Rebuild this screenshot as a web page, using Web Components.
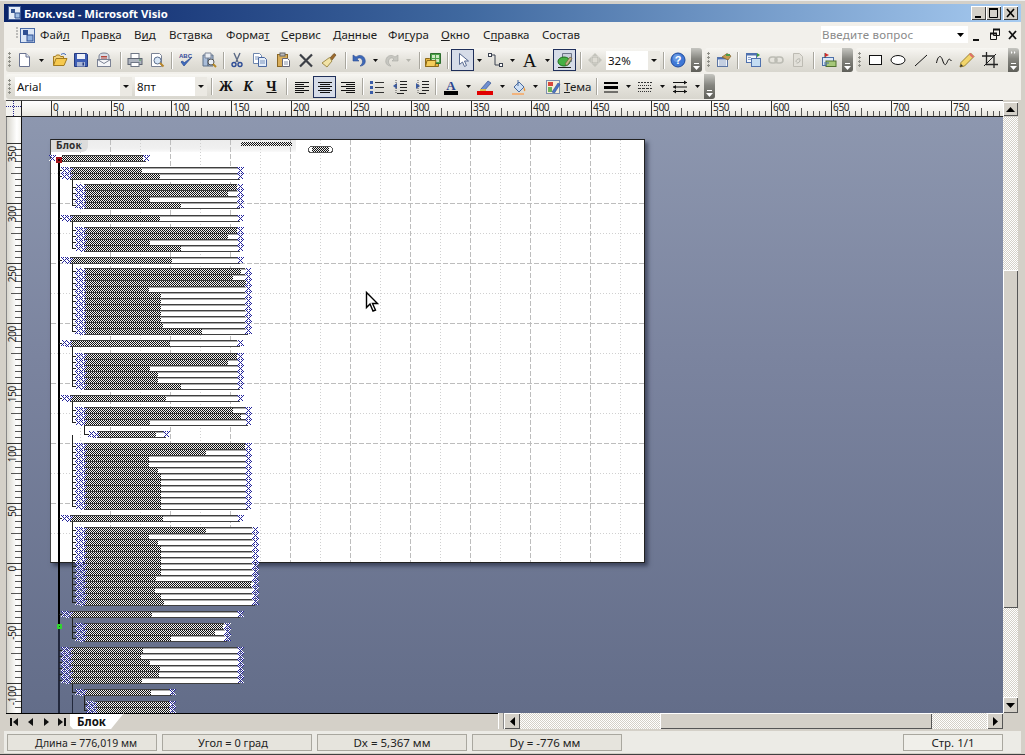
<!DOCTYPE html>
<html lang="ru">
<head>
<meta charset="utf-8">
<title>Блок.vsd - Microsoft Visio</title>
<style>
html, body { margin: 0; padding: 0; background: #d4d0c8; overflow: hidden; }
</style>
</head>
<body>
<vs-window>
    <vs-titlebar></vs-titlebar>
    <vs-menubar></vs-menubar>
    <vs-dock h="26">
        <vs-toolbar w="696">
            <vs-btn icon="new" w="17"></vs-btn><vs-dd w="18"></vs-dd>
            <vs-btn icon="open" w="20"></vs-btn><vs-btn icon="save" w="22"></vs-btn><vs-btn icon="mail" w="24"></vs-btn>
            <vs-sep w="8"></vs-sep>
            <vs-btn icon="print" w="21"></vs-btn><vs-btn icon="preview" w="23"></vs-btn>
            <vs-sep w="6"></vs-sep>
            <vs-btn icon="spell" w="24"></vs-btn><vs-btn icon="research" w="22"></vs-btn>
            <vs-sep w="6"></vs-sep>
            <vs-btn icon="cut" w="22"></vs-btn><vs-btn icon="copy" w="24"></vs-btn><vs-btn icon="paste" w="22"></vs-btn><vs-btn icon="del" w="24"></vs-btn><vs-btn icon="brush" w="22"></vs-btn>
            <vs-sep w="10"></vs-sep>
            <vs-btn icon="undo" w="17"></vs-btn><vs-dd w="16"></vs-dd><vs-btn icon="redo" w="18"></vs-btn><vs-dd w="14" dim></vs-dd>
            <vs-sep w="8"></vs-sep>
            <vs-btn icon="shapes" w="20"></vs-btn>
            <vs-sep w="8"></vs-sep>
            <vs-btn icon="pointer" w="23" selected></vs-btn><vs-dd w="10"></vs-dd>
            <vs-btn icon="connector" w="22"></vs-btn><vs-dd w="12"></vs-dd>
            <vs-btn glyph="A" w="23"></vs-btn><vs-dd w="12"></vs-dd>
            <vs-btn icon="tool" w="23" selected></vs-btn>
            <vs-sep w="9"></vs-sep>
            <vs-btn icon="pan" w="19"></vs-btn>
            <vs-combo w="56" inset="2" text="32%"></vs-combo>
            <vs-sep w="6"></vs-sep>
            <vs-btn icon="help" w="24"></vs-btn>
        </vs-toolbar>
        <vs-toolbar w="148">
            <vs-btn icon="layer" w="19"></vs-btn>
            <vs-sep w="8"></vs-sep>
            <vs-btn icon="windows" w="24"></vs-btn><vs-btn icon="link" w="22"></vs-btn><vs-btn icon="refresh" w="22"></vs-btn>
            <vs-sep w="8"></vs-sep>
            <vs-btn icon="flag" w="24"></vs-btn>
        </vs-toolbar>
        <vs-toolbar w="163" more>
            <vs-btn icon="rect" w="21"></vs-btn><vs-btn icon="ellipse" w="23"></vs-btn><vs-btn icon="line" w="23"></vs-btn><vs-btn icon="free" w="23"></vs-btn><vs-btn icon="pencil" w="23"></vs-btn><vs-btn icon="crop" w="24"></vs-btn>
        </vs-toolbar>
    </vs-dock>
    <vs-dock h="27">
        <vs-toolbar w="709">
            <vs-combo w="120" pad="3" text="Arial"></vs-combo>
            <vs-combo w="72" text="8пт"></vs-combo>
            <vs-sep w="9"></vs-sep>
            <vs-btn glyph="Ж" w="20" weight="700"></vs-btn><vs-btn glyph="К" w="24" weight="700" italic></vs-btn><vs-btn glyph="Ч" w="23" weight="700" under></vs-btn>
            <vs-sep w="7"></vs-sep>
            <vs-btn icon="left" w="23"></vs-btn><vs-btn icon="center" w="23" selected></vs-btn><vs-btn icon="right" w="23"></vs-btn>
            <vs-sep w="6"></vs-sep>
            <vs-btn icon="list" w="23"></vs-btn><vs-btn icon="outdent" w="23"></vs-btn><vs-btn icon="indent" w="21"></vs-btn>
            <vs-sep w="7"></vs-sep>
            <vs-btn icon="fontcolor" w="23"></vs-btn><vs-dd w="12"></vs-dd>
            <vs-btn icon="linecolor" w="22"></vs-btn><vs-dd w="12"></vs-dd>
            <vs-btn icon="fillcolor" w="22"></vs-btn><vs-dd w="11"></vs-dd>
            <vs-btn icon="theme" w="23"></vs-btn><vs-label w="28"><u>Т</u>ема</vs-label>
            <vs-sep w="8"></vs-sep>
            <vs-btn icon="weight" w="22"></vs-btn><vs-dd w="13"></vs-dd>
            <vs-btn icon="pattern" w="20"></vs-btn><vs-dd w="14"></vs-dd>
            <vs-btn icon="ends" w="22"></vs-btn><vs-dd w="12"></vs-dd>
        </vs-toolbar>
    </vs-dock>
    <vs-workspace></vs-workspace>
    <vs-tabrow></vs-tabrow>
    <vs-statusbar>
        <vs-cell w="150" nudge="8" size="10.5">Длина = 776,019 мм</vs-cell>
        <vs-cell w="150" nudge="-8" size="11">Угол = 0 град</vs-cell>
        <vs-cell w="150">Dx = 5,367 мм</vs-cell>
        <vs-cell w="150" nudge="-4">Dy = -776 мм</vs-cell>
        <vs-cell w="100" push>Стр. 1/1</vs-cell>
    </vs-statusbar>
</vs-window>

<script>
const UI_FONT = `"Noto Sans", "Open Sans", sans-serif`;

const ICONS = {
    new: `<path d="M3.5 1.5h6.5l3.5 3.5v9.5h-10z" fill="#fff" stroke="#6a7390"/><path d="M10 1.5v3.5h3.5" fill="#dfe6f2" stroke="#6a7390"/>`,
    open: `<path d="M1.5 13.5v-9h2l1-1.5h3l1 1.5h3v2" fill="#f3d27a" stroke="#a37b1f"/><path d="M1.5 13.5l2.5-7h11l-3 7z" fill="#f6c94f" stroke="#a37b1f"/><path d="M9 2.5c2-1.5 4-1 5 .5" fill="none" stroke="#3a66b8"/>`,
    save: `<path d="M1.5 1.5h12l1 1v12h-13z" fill="#3f5fb5" stroke="#243a80"/><rect x="4" y="2" width="8" height="5" fill="#eef1f8"/><rect x="4" y="10" width="8" height="4.5" fill="#aab6d5"/><rect x="9.5" y="10.5" width="1.5" height="3" fill="#243a80"/>`,
    mail: `<path d="M3 8V4c0-2 2-3 5-3s5 1 5 3v4" fill="#d8dce4" stroke="#7b8294"/><rect x="1.5" y="7.5" width="13" height="7" fill="#f4f5f8" stroke="#7b8294"/><path d="M1.5 7.5l6.5 4 6.5-4" fill="none" stroke="#7b8294"/><path d="M5 4.5h6M5 6h6" stroke="#b5473c"/>`,
    print: `<rect x="4" y="1.5" width="8" height="5" fill="#fff" stroke="#6f7785"/><rect x="1" y="6.5" width="14" height="6" fill="#aeb4bf" stroke="#5e6572"/><rect x="4" y="10.5" width="8" height="4" fill="#fff" stroke="#6f7785"/><path d="M12 8h2" stroke="#46a046"/>`,
    preview: `<path d="M2.5 1.5h8l2 2v11h-10z" fill="#fff" stroke="#7a8294"/><circle cx="8.5" cy="8.5" r="3.5" fill="#d7e6f6" stroke="#5d6f8e"/><path d="M11 11l3.5 3.5" stroke="#b8862b" stroke-width="2"/>`,
    spell: `<text x="1" y="6" font-size="6" font-weight="700" font-family="Liberation Sans" fill="#33499a">ABC</text><path d="M3 10l3 4 8-9-7.5 5.5L4 9z" fill="#3f6cc0" stroke="#2b4a8f" stroke-width=".7"/>`,
    research: `<path d="M2 3h5v11H2zM7 3h5v11H7z" fill="#a9bdd9" stroke="#5f7088"/><path d="M4 1h6v5H4z" fill="#e9edf3" stroke="#7c8698"/><circle cx="10" cy="10" r="3" fill="#e8eef6" stroke="#555"/><path d="M12 12l3 3" stroke="#b68928" stroke-width="2"/>`,
    cut: `<path d="M5 1l4 9M11 1L7 10" stroke="#5b6a85" stroke-width="1.4" fill="none"/><circle cx="5" cy="12.5" r="2" fill="none" stroke="#2f4d96" stroke-width="1.4"/><circle cx="11" cy="12.5" r="2" fill="none" stroke="#2f4d96" stroke-width="1.4"/>`,
    copy: `<path d="M1.5 1.5h6l2 2v8h-8z" fill="#fff" stroke="#6e86ad"/><path d="M6.5 5.5h6l2 2v7h-8z" fill="#e4edf8" stroke="#4a67a0"/><path d="M8 9h5M8 11h5M3 5h4M3 7h3" stroke="#7a93bd"/>`,
    paste: `<rect x="2.5" y="2.5" width="10" height="12" fill="#d9ae5b" stroke="#8a6726"/><rect x="5" y="1" width="5" height="3" fill="#bbb" stroke="#666"/><path d="M7.5 6.5h5l2 2v6h-7z" fill="#fff" stroke="#667"/><path d="M9 10h4M9 12h4" stroke="#8892a8"/>`,
    del: `<path d="M2 2.5l12 12M14 2.5l-12 12" stroke="#3c3f46" stroke-width="2.2" fill="none"/>`,
    brush: `<path d="M9 6l4-4.5 2 1.5-4 5z" fill="#9c6a2d" stroke="#6d4a1e" stroke-width=".7"/><path d="M8.5 5.5L11 9 6 15 1 11z" fill="#f2e3a6" stroke="#a08c4c"/>`,
    undo: `<path d="M2 3v6h6L6 7c2-2 5-1 5.5 2 .3 2-1 4-2.5 5 4 0 6-3 5-6.5C13 3.5 8.5 2 5 5z" fill="#3d68b8" stroke="#2b4c90" stroke-width=".6"/>`,
    redo: `<path d="M14 3v6H8l2-2c-2-2-5-1-5.5 2C4.2 11 5.5 13 7 14c-4 0-6-3-5-6.5C3 3.5 7.5 2 11 5z" fill="#c6c6c0" stroke="#a8a8a2" stroke-width=".6"/>`,
    shapes: `<path d="M.5 14.5v-8h4l1-1h8v9z" fill="#e8b53c" stroke="#8d6a1a"/><path d="M5.5 1.5h10v10h-10z" fill="#4ca24a" stroke="#2d6d2c"/><path d="M7 3h3v3H7zM11 3h3v3h-3zM7 7h3v3H7zM11 7h3v3h-3z" fill="#cfe9c3"/><path d="M.5 14.5l1.5-6h9l-1 6z" fill="#f4cc5a" stroke="#8d6a1a"/>`,
    pointer: `<path d="M4.5 1.5v11l3-2.5 2 4.5 2-1-2-4.5h4z" fill="#fff" stroke="#55678f"/>`,
    connector: `<rect x="1.5" y="1.5" width="3" height="3" fill="#fff" stroke="#3b4250"/><rect x="12.5" y="11.5" width="3" height="3" fill="#fff" stroke="#3b4250"/><path d="M4.5 3h3.5v10h4.5" fill="none" stroke="#3b4250"/>`,
    tool: `<path d="M5.5 1.5h9v8h-9z" fill="#c9cfdb" stroke="#6c7488"/><ellipse cx="7" cy="9.5" rx="6" ry="4.5" fill="#45b044" stroke="#1f6e1f"/><path d="M8 12l5-7 2 1.5-5 7z" fill="#c7b68b" stroke="#6b5f3a" stroke-width=".7"/><path d="M1 15.5h13" stroke="#222"/>`,
    pan: `<path d="M8 1l3 3H5zM8 15l3-3H5zM1 8l3-3v6zM15 8l-3-3v6z" fill="#c4c4bc"/><rect x="5" y="5" width="6" height="6" fill="#dedcd4" stroke="#b5b5ad"/>`,
    help: `<circle cx="8" cy="8" r="7" fill="#3f78d6" stroke="#1f4a9c"/><circle cx="7" cy="6" r="4" fill="#7faaea" opacity=".6"/><text x="8" y="12" font-size="11" font-weight="700" text-anchor="middle" font-family="Liberation Sans" fill="#fff">?</text>`,
    layer: `<rect x="1.5" y="5.5" width="10" height="9" fill="#eef2f8" stroke="#5c75a3"/><path d="M1.5 5.5h10v2h-10z" fill="#4c70b5"/><path d="M3 9h7M3 11h7M3 13h7" stroke="#9bacc9"/><path d="M6 5l5-3.5 4 2.5-3 4z" fill="#c79a4d" stroke="#7d5d25" stroke-width=".7"/><path d="M10 3h4" stroke="#4a9a4a" stroke-width="2"/>`,
    windows: `<rect x="1.5" y="1.5" width="10" height="9" fill="#f3f6fb" stroke="#4f71ae"/><path d="M1.5 1.5h10v2h-10z" fill="#4f71ae"/><path d="M3 5.5h3M3 7.5h3" stroke="#8ba3cc"/><rect x="6.5" y="6.5" width="9" height="8" fill="#c3dcf2" stroke="#4f71ae"/><path d="M12 1l3 2-3 2z" fill="#3d9a3d"/>`,
    link: `<rect x="1" y="5" width="8" height="6" rx="3" fill="none" stroke="#bcbcb4" stroke-width="1.6"/><rect x="7" y="5" width="8" height="6" rx="3" fill="none" stroke="#bcbcb4" stroke-width="1.6"/>`,
    refresh: `<path d="M3.5 1.5h6l3 3v10h-9z" fill="#e2e0d9" stroke="#bdbbb3"/><path d="M6 10a3 3 0 0 1 4-3M10 7.5a3 3 0 0 1-3.5 3.5" fill="none" stroke="#b5b5ad"/>`,
    flag: `<rect x="1.5" y="5.5" width="11" height="8" fill="#dce8f6" stroke="#4c6fa8"/><rect x="5" y="9" width="10" height="5.5" fill="#a6c879" stroke="#50712f"/><path d="M4 1v5" stroke="#444"/><path d="M4 1l4 2-4 2z" fill="#d02a2a"/><path d="M3 11h5M3 13h3" stroke="#4c6fa8"/>`,
    rect: `<rect x="1.5" y="3.5" width="12" height="9" fill="#fff" stroke="#111"/>`,
    ellipse: `<ellipse cx="8" cy="8" rx="7" ry="4.5" fill="#fff" stroke="#111"/>`,
    line: `<path d="M2 14L14 3" stroke="#111" fill="none"/>`,
    free: `<path d="M.5 11C2 3 5 3 6.5 8s3 6 4.5 2.5S13 6 15.5 9" stroke="#111" fill="none"/>`,
    pencil: `<path d="M1 15l1-4.5L11.5 1l3.5 3.5L5.5 14z" fill="#f2d56b" stroke="#9c8431"/><path d="M1 15l1-3 2 2z" fill="#333"/><path d="M11.5 1l3.5 3.5-1.5 1.5-3.5-3.5z" fill="#e0706a"/>`,
    crop: `<path d="M4.5 0v12.5H16M0 4h12v12" fill="none" stroke="#222" stroke-width="1.3"/><path d="M2 14L14 2" stroke="#222"/>`,
    left: `<path d="M1 3.5h14M1 5.5h9M1 7.5h14M1 9.5h9M1 11.5h14M1 13.5h9" stroke="#111"/>`,
    center: `<path d="M1 3.5h14M3 5.5h10M1 7.5h14M3 9.5h10M1 11.5h14M3 13.5h10" stroke="#111"/>`,
    right: `<path d="M1 3.5h14M6 5.5h9M1 7.5h14M6 9.5h9M1 11.5h14M6 13.5h9" stroke="#111"/>`,
    list: `<path d="M6 3.5h9M6 8.5h9M6 13.5h9" stroke="#333"/><path d="M1 2h3v3H1zM1 7h3v3H1zM1 12h3v3H1z" fill="#3a5ca8"/>`,
    outdent: `<path d="M8 2.5h7M8 5.5h7M8 8.5h7M8 11.5h7M5 14.5h7" stroke="#222"/><path d="M1 7l4-3v6z" fill="#3a5ca8"/><path d="M4 1v13" stroke="#555" stroke-dasharray="1 1"/>`,
    indent: `<path d="M8 2.5h7M8 5.5h7M8 8.5h7M8 11.5h7M5 14.5h7" stroke="#222"/><path d="M6 7L2 4v6z" fill="#3a5ca8"/><path d="M4 1v13" stroke="#555" stroke-dasharray="1 1"/>`,
    fontcolor: `<text x="8" y="11" font-size="13" font-weight="700" text-anchor="middle" font-family="Liberation Serif" fill="#2b4490">A</text><rect x="1" y="12" width="14" height="4" fill="#000"/>`,
    linecolor: `<path d="M4 10l7-8 3 2-7 8z" fill="#6f8fd0" stroke="#33528f" stroke-width=".7"/><path d="M3 11h6" stroke="#d9c04a" stroke-width="2"/><rect x="0" y="12" width="16" height="4" fill="#e00000"/>`,
    fillcolor: `<path d="M3 8l5-5 5 5-5 5z" fill="#cfe0f4" stroke="#486a9f"/><path d="M7 1v6" stroke="#486a9f"/><path d="M13 8c1 2 2 3 1 4s-2-2-1-4z" fill="#e8963a"/><rect x="1" y="14" width="12" height="2" fill="#f1b37d"/>`,
    theme: `<rect x="1.5" y="1.5" width="13" height="13" fill="#f5efd8" stroke="#7c8fb0"/><path d="M3 3h5v4H3z" fill="#d8483c"/><path d="M3 8h4v5H3z" fill="#6fb25a"/><path d="M7 13L13 4l2 1.5-5.5 8.5z" fill="#4a73c4" stroke="#2e4f92" stroke-width=".6"/>`,
    weight: `<path d="M1 4h14" stroke="#000" stroke-width="2"/><path d="M1 8.5h14" stroke="#000" stroke-width="3"/><path d="M1 13h14" stroke="#000" stroke-width="1"/>`,
    pattern: `<path d="M1 3.5h14" stroke="#333" stroke-dasharray="2 1"/><path d="M1 6.5h14" stroke="#333" stroke-dasharray="1 1"/><path d="M1 9.5h14" stroke="#333" stroke-dasharray="3 1"/><path d="M1 12.5h14" stroke="#333" stroke-dasharray="1 1"/>`,
    ends: `<path d="M1 3.5h14M1 8h14M1 12.5h14" stroke="#111"/><path d="M15 3.5l-3-2v4zM1 8l3-2v4zM15 12.5l-3-2v4zM1 12.5l3-2v4z" fill="#111"/>`
};

class VsWindow extends HTMLElement {
    constructor() {
        super();
        this.attachShadow({ mode: 'open' });
    }

    connectedCallback() {
        this.shadowRoot.innerHTML = `
            <style>
                :host {
                    display: flex;
                    flex-direction: column;
                    width: 1025px;
                    height: 755px;
                    box-sizing: border-box;
                    padding: 4px 4px 2px 4px;
                    background: #d4d0c8;
                    border-top: 1px solid #eee;
                    border-bottom: 1px solid #404040;
                    font-family: ${UI_FONT};
                    overflow: hidden;
                }
            </style>
            <slot></slot>
        `;
    }
}

class VsTitlebar extends HTMLElement {
    constructor() {
        super();
        this.attachShadow({ mode: 'open' });
    }

    connectedCallback() {
        this.shadowRoot.innerHTML = `
            <style>
                :host {
                    display: flex;
                    align-items: center;
                    height: 18px;
                    margin-top: -1px;
                    flex: none;
                    background: linear-gradient(90deg, #0a246a, #3f689f 45%, #a6caf0);
                    color: #fff;
                    font: 700 11.3px "Noto Sans", sans-serif;
                }
                .logo { margin: 0 1px 0 3px; flex: none; }
                .title { flex: 1; white-space: nowrap; }
                .btns { display: flex; margin-right: 3px; }
                .btn {
                    width: 15px;
                    height: 14px;
                    background: #d4d0c8;
                    box-shadow: inset 1px 1px #fff, inset -1px -1px #404040;
                }
                svg { display: block; }
            </style>
            <svg class="logo" width="16" height="16" viewBox="0 0 16 16"><rect x="1.5" y="1.5" width="12" height="13" fill="#e3ebf7" stroke="#445f97"/><path d="M4 4h4v4H4z" fill="#33528f"/><path d="M8 8h5v5H8z" fill="#9fbce2" stroke="#33528f"/></svg>
            <div class="title">Блок.vsd - Microsoft Visio</div>
            <div class="btns">
                <div class="btn"><svg width="15" height="14"><path d="M4 10h6v2H4z" fill="#000"/></svg></div>
                <div class="btn"><svg width="15" height="14"><path d="M3.5 2.5h8v9h-8z" fill="none" stroke="#000"/><path d="M3 3h9" stroke="#000" stroke-width="2"/></svg></div>
                <div class="btn" style="margin-left:2px"><svg width="15" height="14"><path d="M4 3l7 8M11 3l-7 8" stroke="#000" stroke-width="1.6"/></svg></div>
            </div>
        `;
    }
}

class VsMenubar extends HTMLElement {
    constructor() {
        super();
        this.attachShadow({ mode: 'open' });
    }

    connectedCallback() {
        const items = [
            ['Файл', 'л', 41], ['Правка', 'к', 53], ['Вид', 'и', 35], ['Вставка', 'а', 57],
            ['Формат', 'т', 55], ['Сервис', 'С', 52], ['Данные', 'н', 55],
            ['Фигура', 'г', 53], ['Окно', 'О', 42], ['Справка', 'п', 59], ['Состав', '', 58]
        ];
        const html = items.map(([name, key, w]) => {
            const label = key ? name.replace(key, `<u>${key}</u>`) : name;
            return `<span class="item" style="width:${w}px">${label}</span>`;
        }).join('');
        this.shadowRoot.innerHTML = `
            <style>
                :host {
                    display: flex;
                    align-items: center;
                    height: 25px;
                    flex: none;
                    background: #f2f0eb;
                    color: #1c1c1c;
                    font: 11.5px ${UI_FONT};
                    padding-left: 6px;
                    box-sizing: border-box;
                }
                .logo { width: 30px; flex: none; display: block; }
                .item { flex: none; white-space: nowrap; }
                u { text-underline-offset: 1px; }
                .ask {
                    margin-left: auto;
                    width: 147px;
                    height: 17px;
                    flex: none;
                    background: #fff;
                    color: #8a8a8a;
                    display: flex;
                    align-items: center;
                    justify-content: space-between;
                    padding: 0 4px 0 1px;
                    box-sizing: border-box;
                    letter-spacing: .2px;
                }
                .mdi { display: flex; align-items: center; width: 53px; flex: none; padding-left: 2px; box-sizing: border-box; }
                .mdi svg { display: block; }
            </style>
            <svg class="logo" height="20" viewBox="0 0 30 20"><path d="M6 3h3M6 6h3M6 9h3M6 12h3" stroke="#888" stroke-dasharray="2 1"/><rect x="10.5" y="3.5" width="14" height="14" fill="#dbe6f6" stroke="#4a6aa5"/><rect x="13" y="5" width="5" height="5" fill="#2f4f92"/><rect x="17" y="10" width="6" height="6" fill="#8fb0de" stroke="#2f4f92"/></svg>
            ${html}
            <div class="ask"><span>Введите вопрос</span><svg width="7" height="4"><path d="M0 0h7L3.5 4z" fill="#000"/></svg></div>
            <div class="mdi">
                <svg width="17" height="14"><path d="M3 11h6v2H3z" fill="#111"/></svg>
                <svg width="18" height="14"><path d="M6.5 1.5h6v6h-6zM3.5 5.5h6v6h-6z" fill="#f2f0eb" stroke="#111"/><path d="M3 5.5h7M6 1.5h7" stroke="#111" stroke-width="2"/></svg>
                <svg width="16" height="14"><path d="M4 3l7 8M11 3l-7 8" stroke="#111" stroke-width="1.8"/></svg>
            </div>
        `;
    }
}

class VsDock extends HTMLElement {
    constructor() {
        super();
        this.attachShadow({ mode: 'open' });
    }

    connectedCallback() {
        this.shadowRoot.innerHTML = `
            <style>
                :host {
                    display: flex;
                    gap: 3px;
                    flex: none;
                    height: ${this.getAttribute('h')}px;
                    padding: 1px 0 1px 2px;
                    box-sizing: border-box;
                    background: #f2f0eb;
                }
            </style>
            <slot></slot>
        `;
    }
}

class VsToolbar extends HTMLElement {
    constructor() {
        super();
        this.attachShadow({ mode: 'open' });
    }

    connectedCallback() {
        const more = this.hasAttribute('more')
            ? `<path d="M1 0l1.5 1.5L1 3zM4 0l1.5 1.5L4 3z" fill="#fff"/>`
            : '';
        this.shadowRoot.innerHTML = `
            <style>
                :host {
                    display: flex;
                    align-items: center;
                    width: ${this.getAttribute('w')}px;
                    box-sizing: border-box;
                    flex: none;
                    background: linear-gradient(#f7f6f2, #e3e1da 55%, #d8d6ce);
                    border-radius: 3px;
                    padding-left: 2px;
                }
                .grip {
                    width: 7px;
                    height: 16px;
                    flex: none;
                    background: radial-gradient(circle at 1.5px 1.5px, #8f8f88 1.2px, transparent 1.4px) 0 0 / 3px 4px repeat-y;
                }
                .over {
                    margin-left: auto;
                    width: 11px;
                    height: 100%;
                    flex: none;
                    border-radius: 0 3px 3px 0;
                    background: linear-gradient(#c6c6c1, #85857f 45%, #5f5f59);
                    display: flex;
                    flex-direction: column;
                    align-items: center;
                    justify-content: space-between;
                    padding: 3px 0 2px;
                    box-sizing: border-box;
                }
                svg { display: block; }
            </style>
            <div class="grip"></div>
            <slot></slot>
            <div class="over">
                <svg width="7" height="3">${more}</svg>
                <svg width="7" height="8"><path d="M1 1h5v1H1z" fill="#fff"/><path d="M0 4h7L3.5 8z" fill="#fff"/></svg>
            </div>
        `;
    }
}

class VsBtn extends HTMLElement {
    constructor() {
        super();
        this.attachShadow({ mode: 'open' });
    }

    connectedCallback() {
        const icon = this.getAttribute('icon');
        const glyph = this.getAttribute('glyph');
        const body = icon
            ? `<svg width="16" height="16" viewBox="0 0 16 16">${ICONS[icon]}</svg>`
            : `<span class="glyph">${glyph}</span>`;
        const selected = this.hasAttribute('selected');
        this.shadowRoot.innerHTML = `
            <style>
                :host {
                    display: flex;
                    align-items: center;
                    justify-content: center;
                    width: ${this.getAttribute('w')}px;
                    height: 22px;
                    flex: none;
                    box-sizing: border-box;
                    ${selected ? 'background:#d6dce8;border:1px solid #1f2f5a;' : ''}
                }
                svg { display: block; overflow: visible; flex: none; }
                .glyph {
                    font-family: "Liberation Serif", serif;
                    font-size: ${glyph === 'A' ? 19 : 14}px;
                    line-height: 1;
                    color: #111;
                    font-weight: ${this.getAttribute('weight') || 400};
                    ${this.hasAttribute('italic') ? 'font-style: italic;' : ''}
                    ${this.hasAttribute('under') ? 'text-decoration: underline;' : ''}
                }
            </style>
            ${body}
        `;
    }
}

class VsDd extends HTMLElement {
    constructor() {
        super();
        this.attachShadow({ mode: 'open' });
    }

    connectedCallback() {
        const color = this.hasAttribute('dim') ? '#b5b5ad' : '#111';
        this.shadowRoot.innerHTML = `
            <style>
                :host {
                    display: flex;
                    align-items: center;
                    justify-content: center;
                    width: ${this.getAttribute('w')}px;
                    flex: none;
                }
                svg { display: block; }
            </style>
            <svg width="5" height="3"><path d="M0 0h5L2.5 3z" fill="${color}"/></svg>
        `;
    }
}

class VsSep extends HTMLElement {
    constructor() {
        super();
        this.attachShadow({ mode: 'open' });
    }

    connectedCallback() {
        this.shadowRoot.innerHTML = `
            <style>
                :host {
                    display: flex;
                    justify-content: center;
                    width: ${this.getAttribute('w')}px;
                    flex: none;
                }
                div { width: 1px; height: 17px; background: #a8a69e; box-shadow: 1px 0 #fff; }
            </style>
            <div></div>
        `;
    }
}

class VsCombo extends HTMLElement {
    constructor() {
        super();
        this.attachShadow({ mode: 'open' });
    }

    connectedCallback() {
        const inset = this.getAttribute('inset') || 0;
        const pad = this.getAttribute('pad') || 0;
        this.shadowRoot.innerHTML = `
            <style>
                :host {
                    display: flex;
                    align-items: center;
                    width: ${this.getAttribute('w')}px;
                    height: 19px;
                    flex: none;
                    box-sizing: border-box;
                    padding: 0 ${pad}px 0 ${inset}px;
                    font: 11.5px ${UI_FONT};
                    color: #111;
                }
                .box { flex: 1; display: flex; align-items: center; background: #fff; height: 100%; padding-left: 2px; min-width: 0; }
                .arrow { width: 12px; height: 100%; flex: none; display: flex; align-items: center; justify-content: center; background: #ebe9e3; }
                span { flex: 1; }
                svg { display: block; }
            </style>
            <div class="box"><span>${this.getAttribute('text')}</span><div class="arrow"><svg width="6" height="3"><path d="M0 0h6L3 3z" fill="#111"/></svg></div></div>
        `;
    }
}

class VsLabel extends HTMLElement {
    constructor() {
        super();
        this.attachShadow({ mode: 'open' });
    }

    connectedCallback() {
        this.shadowRoot.innerHTML = `
            <style>
                :host {
                    display: block;
                    width: ${this.getAttribute('w')}px;
                    flex: none;
                    font: 11.5px ${UI_FONT};
                    color: #1c1c1c;
                }
            </style>
            <slot></slot>
        `;
    }
}

class VsRuler extends HTMLElement {
    constructor() {
        super();
        this.attachShadow({ mode: 'open' });
    }

    connectedCallback() {
        const vertical = this.hasAttribute('vertical');
        const labels = this.getAttribute('labels').split(',');
        const lead = this.getAttribute('lead');
        const cells = labels.map(l => `<div class="cell"><span>${l}</span></div>`).join('');
        const dir = vertical ? 'to bottom' : 'to right';
        const short = `repeating-linear-gradient(${dir}, #555 0 1px, transparent 1px 6px)`;
        const mid = `repeating-linear-gradient(${dir}, #555 0 1px, transparent 1px 30px)`;
        this.shadowRoot.innerHTML = `
            <style>
                :host {
                    display: flex;
                    ${vertical ? 'flex-direction: column;' : ''}
                    box-sizing: border-box;
                    min-width: 0;
                    min-height: 0;
                    background: linear-gradient(${vertical ? '90deg, #d8d6ce, #fff 70%, #f4f3ef' : '#fff, #f4f3ef 55%, #e7e5de'});
                    font: 10px ${UI_FONT};
                    letter-spacing: -.3px;
                    color: #222;
                }
                .lead { flex: none; ${vertical ? `height:${lead}px;` : `width:${lead}px;`} }
                .cell {
                    flex: none;
                    box-sizing: border-box;
                    ${vertical ? `
                        height: 60px;
                        background:
                            linear-gradient(#333, #333) 0 0 / 100% 1px no-repeat,
                            ${mid} right / 10px 100% no-repeat,
                            ${short} right / 6px 100% no-repeat;
                    ` : `
                        width: 60px;
                        background:
                            linear-gradient(#333, #333) 0 0 / 1px 100% no-repeat,
                            ${mid} bottom / 100% 8px no-repeat,
                            ${short} bottom / 100% 5px no-repeat;
                    `}
                }
                .cell:last-child { ${vertical ? 'height: 30px;' : 'width: 52px;'} }
                span {
                    display: block;
                    line-height: 1;
                    ${vertical ? `
                        writing-mode: vertical-rl;
                        transform: rotate(180deg);
                        padding: 0 0 3px 0;
                        width: 12px;
                    ` : `
                        padding: 1px 0 0 2px;
                    `}
                }
            </style>
            <div class="lead"></div>
            ${cells}
        `;
    }
}

class VsDrawing extends HTMLElement {
    constructor() {
        super();
        this.attachShadow({ mode: 'open' });
    }

    gridLines() {
        let out = '';
        for (let x = 80, i = 0; x < 645; x += 30, i++) {
            const dark = i % 2 === 1;
            out += `<path d="M${x}.5 140V562" stroke="${dark ? '#bdbdbd' : '#d0d0d0'}" stroke-dasharray="${dark ? '5 2' : '1 2'}"/>`;
        }
        for (let y = 173, i = 0; y < 563; y += 30, i++) {
            const dark = i % 2 === 1;
            out += `<path d="M51 ${y}.5H644" stroke="${dark ? '#bdbdbd' : '#d0d0d0'}" stroke-dasharray="${dark ? '5 2' : '1 2'}"/>`;
        }
        return out;
    }

    handle(x, y) {
        return `<path d="M${x} ${y}l5 6M${x + 5} ${y}l-5 6" stroke="url(#hatch)" stroke-width="1.8" fill="none"/>`;
    }

    row(x0, fillEnd, right, y) {
        return `
            <rect x="${x0}" y="${y}" width="${right - x0}" height="6" fill="#fff"/>
            <rect x="${x0}" y="${y + 1}" width="${fillEnd - x0}" height="5" fill="url(#dither)"/>
            <rect x="${fillEnd}" y="${y + 1}" width="${right - fillEnd}" height="1" fill="#aaa"/>
            <rect x="${x0}" y="${y}" width="${right - x0}" height="1" fill="#3f3f3f"/>
            ${this.handle(x0 - 8, y)}${this.handle(x0 - 3, y + 1)}${this.handle(right - 2, y)}
        `;
    }

    rows() {
        const groups = [
            [167, 1, 240, [142, 160]],
            [184, 2, 240, [237, 228, 150, 181]],
            [215, 1, 240, [160]],
            [227, 2, 240, [237, 228, 150, 181]],
            [257, 1, 240, [172]],
            [268, 2, 248, [241, 233, 246, 149, 161, 161, 161, 161, 161, 163, 202]],
            [340, 1, 240, [170]],
            [353, 2, 240, [237, 228, 150, 158, 158, 181]],
            [395, 1, 240, [166]],
            [407, 2, 248, [233, 241, 150]],
            [431, 3, 166, [156]],
            [443, 2, 248, [245, 206, 149, 149, 158, 161, 161, 161, 161, 161, 161]],
            [515, 1, 240, [163]],
            [527, 2, 255, [206, 149, 158, 161, 161, 161, 161, 161, 156, 251, 155, 161, 164]],
            [611, 1, 240, [152]],
            [623, 2, 227, [223, 215, 171]],
            [647, 1, 240, [143, 141, 150, 160, 159, 142]],
            [689, 2, 172, [151]],
            [701, 4, 172, [170, 170]]
        ];
        const starts = { 1: 70, 2: 84, 3: 97, 4: 95 };
        const spines = { 1: 59, 2: 72, 3: 84, 4: 84 };
        let lines = '';
        let shapes = '';
        for (const [y, level, right, fills] of groups) {
            const x0 = starts[level];
            const spine = spines[level];
            fills.forEach((fill, i) => {
                const ry = y + i * 6;
                shapes += this.row(x0, fill, right, ry);
                lines += `<path d="M${spine} ${ry + 3.5}H${x0 - 8}" stroke="#222"/>`;
            });
            const bottom = y + fills.length * 6;
            shapes += `<rect x="${x0}" y="${bottom}" width="${right - x0}" height="1" fill="#3f3f3f"/>`;
            if (level > 1) {
                lines += `<path d="M${spine + .5} ${y - 8}V${bottom - 3}" stroke="#222"/>`;
            }
        }
        return lines + shapes;
    }

    connectedCallback() {
        this.shadowRoot.innerHTML = `
            <style>
                :host {
                    display: block;
                    position: relative;
                    overflow: hidden;
                    background: linear-gradient(#8d97af, #7b849f 40%, #636d89);
                    min-width: 0;
                    min-height: 0;
                }
                .page {
                    position: absolute;
                    left: 28px;
                    top: 22px;
                    width: 595px;
                    height: 424px;
                    box-sizing: border-box;
                    background: #fff;
                    border: 1px solid #222;
                    border-left-color: #444;
                    box-shadow: 3px 3px 4px rgba(20, 25, 45, .55);
                }
                .head {
                    position: absolute;
                    left: 0;
                    top: 0;
                    width: 245px;
                    height: 12px;
                    background: linear-gradient(#ececec, #f0f0f0 70%, #fafafa);
                    display: flex;
                    font: 700 10px ${UI_FONT};
                    color: #2e2e2e;
                }
                .label {
                    width: 37px;
                    box-sizing: border-box;
                    padding-left: 5px;
                    line-height: 11px;
                    background: #dcdcdc;
                    border-radius: 0 0 6px 0;
                    letter-spacing: .2px;
                }
                svg { position: absolute; left: 0; top: 0; display: block; }
            </style>
            <div class="page"><div class="head"><div class="label">Блок</div></div></div>
            <svg width="981" height="596" viewBox="22 117 981 596">
                <defs>
                    <pattern id="dither" width="2" height="2" patternUnits="userSpaceOnUse">
                        <rect width="2" height="2" fill="#f0f0f0"/>
                        <rect width="1" height="1" fill="#111"/>
                        <rect x="1" y="1" width="1" height="1" fill="#111"/>
                    </pattern>
                    <pattern id="hatch" width="2" height="2" patternUnits="userSpaceOnUse">
                        <rect width="2" height="2" fill="#fff"/>
                        <rect width="1" height="1" fill="#22229a"/>
                        <rect x="1" y="1" width="1" height="1" fill="#22229a"/>
                    </pattern>
                </defs>
                <g shape-rendering="crispEdges">
                    ${this.gridLines()}
                    <rect x="241" y="142" width="51" height="4" fill="url(#dither)"/>
                    <rect x="308.5" y="146.5" width="24" height="6" rx="3" fill="#fff" stroke="#555"/>
                    <rect x="312" y="147" width="17" height="5" fill="url(#dither)"/>
                    <path d="M59 160V626" stroke="#000" stroke-width="2"/>
                    <path d="M59 626V713" stroke="#22283c" stroke-width="2"/>
                    <path d="M72 695V713" stroke="#22283c"/>
                    ${this.rows()}
                    <rect x="62" y="155" width="84" height="1" fill="#3f3f3f"/>
                    <rect x="62" y="161" width="84" height="1" fill="#3f3f3f"/>
                    <rect x="62" y="156" width="81" height="5" fill="url(#dither)"/>
                    <rect x="143" y="156" width="3" height="5" fill="#fff"/>
                    ${this.handle(50, 155)}${this.handle(144, 155)}
                    <rect x="56" y="157" width="6" height="6" fill="#a3121a"/>
                    <rect x="58" y="159" width="2" height="2" fill="#2a0505"/>
                    <rect x="57" y="624" width="5" height="5" fill="#2fd62f"/>
                    <rect x="59" y="626" width="1" height="1" fill="#075f07"/>
                </g>
                <path d="M366.5 292.5v15l3.5-3.5 3 7 2.500-1-3-6.500h5z" fill="#fff" stroke="#000" stroke-width="1.4"/>
            </svg>
        `;
    }
}

class VsVscroll extends HTMLElement {
    constructor() {
        super();
        this.attachShadow({ mode: 'open' });
    }

    connectedCallback() {
        this.shadowRoot.innerHTML = `
            <style>
                :host {
                    display: grid;
                    grid-template-rows: 153px 338px 1fr 16px;
                    width: 15px;
                    min-height: 0;
                    background: repeating-conic-gradient(#d4d0c8 0 25%, #fff 0 50%) 0 0 / 2px 2px;
                }
                .thumb { background: #d4d0c8; box-shadow: inset 1px 1px #fff, inset -1px -1px #555; grid-row: 2; }
                .down {
                    grid-row: 4;
                    background: #d4d0c8;
                    box-shadow: inset 1px 1px #fff, inset -1px -1px #555;
                    display: flex; align-items: center; justify-content: center;
                }
                svg { display: block; }
            </style>
            <div class="thumb"></div>
            <div class="down"><svg width="9" height="5"><path d="M0 0h9L4.5 5z" fill="#000"/></svg></div>
        `;
    }
}

class VsWorkspace extends HTMLElement {
    constructor() {
        super();
        this.attachShadow({ mode: 'open' });
    }

    connectedCallback() {
        const tops = [];
        for (let v = 0; v <= 750; v += 50) tops.push(v);
        this.shadowRoot.innerHTML = `
            <style>
                :host {
                    display: grid;
                    flex: none;
                    height: 613px;
                    grid-template-columns: 16px 981px 15px;
                    grid-template-rows: 17px 596px;
                    padding-left: 2px;
                    box-sizing: border-box;
                }
                .corner {
                    background: #f4f3ef;
                    border-top: 1px solid #444;
                    border-bottom: 1px solid #222;
                    border-right: 1px solid #222;
                    box-sizing: border-box;
                    position: relative;
                }
                .corner::before { content: ""; position: absolute; left: 0; right: 0; top: 5px; border-top: 1px dotted #2a2a90; }
                .corner::after { content: ""; position: absolute; left: 7px; top: 0; bottom: 0; border-left: 1px dotted #2a2a90; }
                .top { border-top: 1px solid #444; border-bottom: 1px solid #222; box-sizing: border-box; display: flex; min-width: 0; }
                .side { border-right: 1px solid #111; box-sizing: border-box; display: flex; flex-direction: column; border-left: 1px solid #888; min-height: 0; }
                vs-ruler { flex: 1; }
                .up {
                    background: #d4d0c8;
                    box-shadow: inset 1px 1px #fff, inset -1px -1px #555;
                    display: flex; align-items: center; justify-content: center;
                    margin: 2px 0 1px;
                }
                svg { display: block; }
            </style>
            <div class="corner"></div>
            <div class="top"><vs-ruler lead="29" labels="${tops.join(',')}"></vs-ruler></div>
            <div class="up"><svg width="9" height="5"><path d="M0 5h9L4.5 0z" fill="#000"/></svg></div>
            <div class="side"><vs-ruler vertical lead="26" labels="350,300,250,200,150,100,50,0,-50,-100"></vs-ruler></div>
            <vs-drawing></vs-drawing>
            <vs-vscroll></vs-vscroll>
        `;
    }
}

class VsTabrow extends HTMLElement {
    constructor() {
        super();
        this.attachShadow({ mode: 'open' });
    }

    connectedCallback() {
        const tri = (d) => `<svg width="16" height="10" viewBox="0 0 16 10"><path d="${d}" fill="#111"/></svg>`;
        this.shadowRoot.innerHTML = `
            <style>
                :host {
                    display: flex;
                    flex: none;
                    height: 16px;
                    padding-left: 2px;
                    box-sizing: border-box;
                    background: #d4d0c8;
                }
                .nav { display: flex; align-items: center; width: 64px; flex: none; border-top: 1px solid #000; box-sizing: border-box; }
                .tab {
                    width: 54px;
                    flex: none;
                    background: #fff;
                    box-sizing: border-box;
                    clip-path: polygon(0 0, 100% 0, 76% 100%, 3px 100%, 0 80%);
                    font: 700 11.5px ${UI_FONT};
                    color: #111;
                    padding-left: 7px;
                    line-height: 15px;
                    border-top: 1px solid #000;
                }
                .rest { width: 374px; flex: none; border-top: 1px solid #000; box-sizing: border-box; }
                .split { width: 6px; flex: none; background: #d4d0c8; box-shadow: inset 1px 0 #fff, inset -1px 0 #888; }
                .track {
                    flex: none;
                    width: 499px;
                    display: grid;
                    grid-template-columns: 16px 140px 272px 1fr 16px;
                    background: repeating-conic-gradient(#d4d0c8 0 25%, #fff 0 50%) 0 0 / 2px 2px;
                }
                .b {
                    background: #d4d0c8;
                    box-shadow: inset 1px 1px #fff, inset -1px -1px #555;
                    display: flex; align-items: center; justify-content: center;
                }
                .thumb { grid-column: 3; }
                .last { grid-column: 5; }
                svg { display: block; }
            </style>
            <div class="nav">
                ${tri('M4 1h2v8H4zM12 1v8L7 5z')}
                ${tri('M11 1v8L6 5z')}
                ${tri('M6 1v8l5-4z')}
                ${tri('M4 1v8l5-4zM10 1h2v8h-2z')}
            </div>
            <div class="tab">Блок</div>
            <div class="rest"></div>
            <div class="split"></div>
            <div class="track">
                <div class="b"><svg width="5" height="9"><path d="M5 0v9L0 4.5z" fill="#000"/></svg></div>
                <div class="b thumb"></div>
                <div class="b last"><svg width="5" height="9"><path d="M0 0v9l5-4.5z" fill="#000"/></svg></div>
            </div>
        `;
    }
}

class VsStatusbar extends HTMLElement {
    constructor() {
        super();
        this.attachShadow({ mode: 'open' });
    }

    connectedCallback() {
        this.shadowRoot.innerHTML = `
            <style>
                :host {
                    display: flex;
                    gap: 5px;
                    flex: none;
                    height: 22px;
                    box-sizing: border-box;
                    padding: 3px 18px 2px 3px;
                    background: #ecebe6;
                    margin-top: 2px;
                }
            </style>
            <slot></slot>
        `;
    }
}

class VsCell extends HTMLElement {
    constructor() {
        super();
        this.attachShadow({ mode: 'open' });
    }

    connectedCallback() {
        const nudge = Number(this.getAttribute('nudge') || 0);
        const pad = nudge > 0 ? `padding-left:${nudge}px;` : `padding-right:${-nudge}px;`;
        this.shadowRoot.innerHTML = `
            <style>
                :host {
                    display: flex;
                    align-items: center;
                    justify-content: center;
                    width: ${this.getAttribute('w')}px;
                    flex: none;
                    box-sizing: border-box;
                    ${pad}
                    border: 1px solid #a9a79f;
                    background: #e6e4dd;
                    font: ${this.getAttribute('size') || 11.5}px ${UI_FONT};
                    color: #222;
                    ${this.hasAttribute('push') ? 'margin-left: auto; background: #f0efea;' : ''}
                }
            </style>
            <slot></slot>
        `;
    }
}

customElements.define('vs-window', VsWindow);
customElements.define('vs-titlebar', VsTitlebar);
customElements.define('vs-menubar', VsMenubar);
customElements.define('vs-dock', VsDock);
customElements.define('vs-toolbar', VsToolbar);
customElements.define('vs-btn', VsBtn);
customElements.define('vs-dd', VsDd);
customElements.define('vs-sep', VsSep);
customElements.define('vs-combo', VsCombo);
customElements.define('vs-label', VsLabel);
customElements.define('vs-ruler', VsRuler);
customElements.define('vs-drawing', VsDrawing);
customElements.define('vs-vscroll', VsVscroll);
customElements.define('vs-workspace', VsWorkspace);
customElements.define('vs-tabrow', VsTabrow);
customElements.define('vs-statusbar', VsStatusbar);
customElements.define('vs-cell', VsCell);
</script>
</body>
</html>
